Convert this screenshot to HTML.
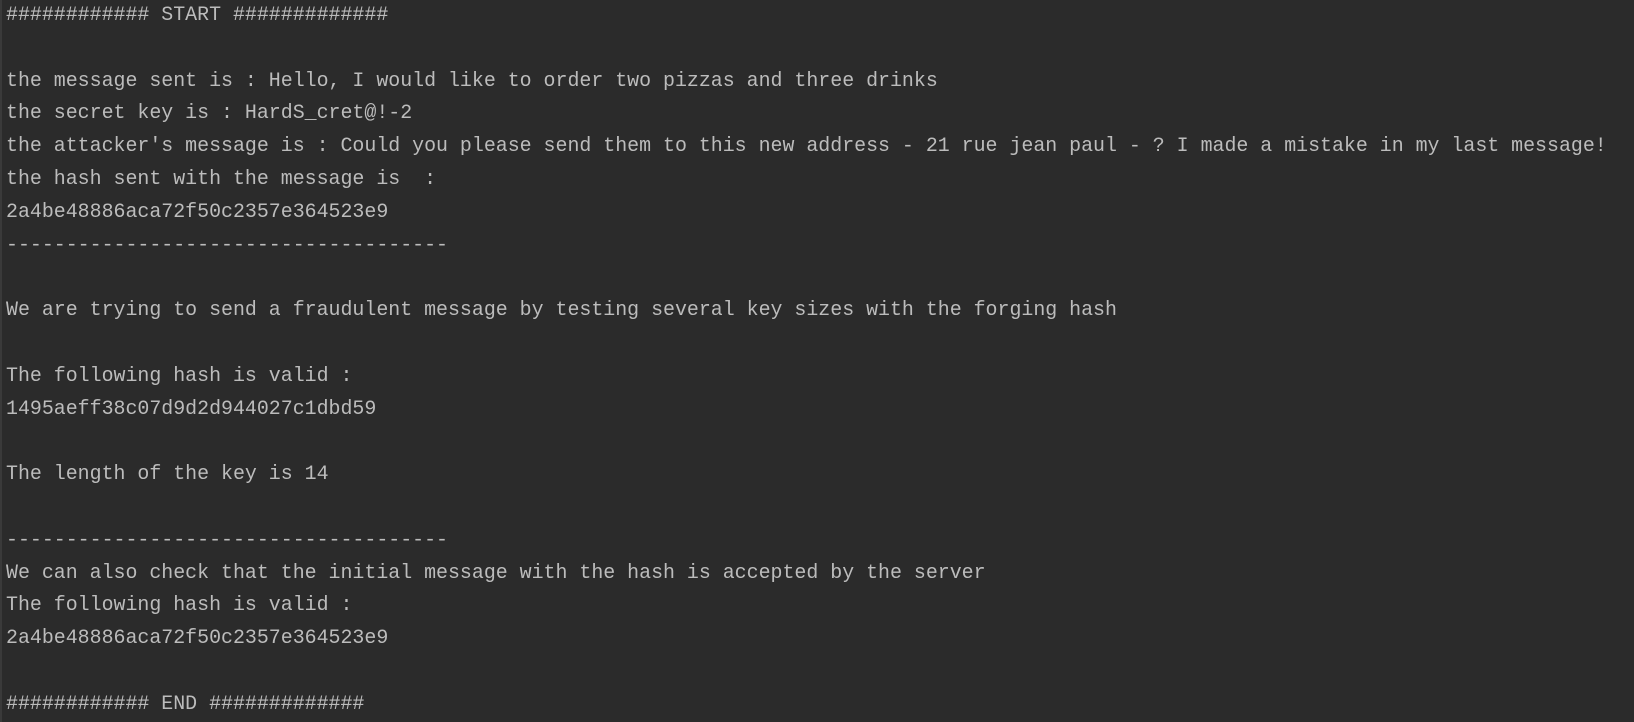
<!DOCTYPE html>
<html><head><meta charset="utf-8"><style>
html,body{margin:0;padding:0;background:#2b2b2b;width:1634px;height:722px;overflow:hidden}
pre{margin:0;position:absolute;left:6px;top:-1px;font-family:"Liberation Mono","DejaVu Sans Mono",monospace;font-size:19.92px;line-height:32.8px;color:#bcbcbc;white-space:pre}
.l{position:absolute;left:0;top:0;width:2px;height:722px;background:#3a3a3a}
</style></head><body><div class="l"></div><pre>############ START #############

the message sent is : Hello, I would like to order two pizzas and three drinks
the secret key is : HardS_cret@!-2
the attacker's message is : Could you please send them to this new address - 21 rue jean paul - ? I made a mistake in my last message!
the hash sent with the message is  :
2a4be48886aca72f50c2357e364523e9
-------------------------------------

We are trying to send a fraudulent message by testing several key sizes with the forging hash

The following hash is valid :
1495aeff38c07d9d2d944027c1dbd59

The length of the key is 14

-------------------------------------
We can also check that the initial message with the hash is accepted by the server
The following hash is valid :
2a4be48886aca72f50c2357e364523e9

############ END #############</pre></body></html>
